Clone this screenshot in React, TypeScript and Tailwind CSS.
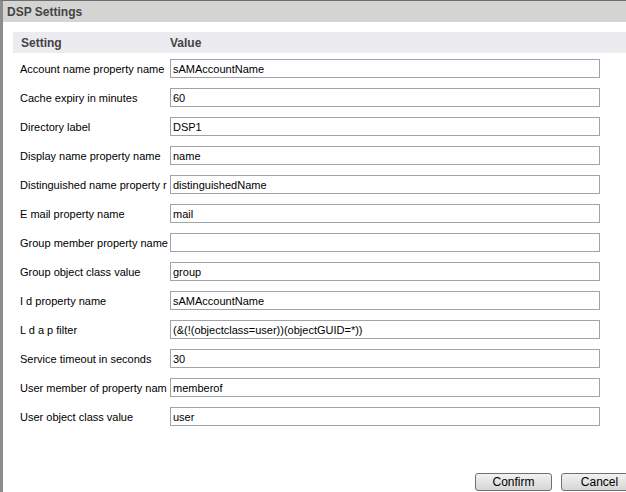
const ROWS: [string, string][] = [
  ["Account name property name", "sAMAccountName"],
  ["Cache expiry in minutes", "60"],
  ["Directory label", "DSP1"],
  ["Display name property name", "name"],
  ["Distinguished name property r", "distinguishedName"],
  ["E mail property name", "mail"],
  ["Group member property name", ""],
  ["Group object class value", "group"],
  ["I d property name", "sAMAccountName"],
  ["L d a p filter", "(&(!(objectclass=user))(objectGUID=*))"],
  ["Service timeout in seconds", "30"],
  ["User member of property nam", "memberof"],
  ["User object class value", "user"],
];

export default function App() {
  return (
    <div
      className="flex h-[492px] w-[626px] flex-col overflow-hidden border-t border-l-[3px] border-t-[#6f6f6f] border-l-[#8c8c8c] bg-white text-[11px] text-black"
      style={{ fontFamily: '"Liberation Sans", Arial, sans-serif' }}
    >
      <div className="flex h-[21px] shrink-0 items-center bg-[#d4d4d2] pl-[4px] text-[12px] font-bold text-[#444]">
        DSP Settings
      </div>

      <div className="flex flex-1 flex-col pl-[10px] pt-[10px]">
        <div className="flex h-[21px] items-center bg-[#ebebf0] text-[12px] font-bold text-[#444]">
          <span className="w-[157px] pl-[8px]">Setting</span>
          <span>Value</span>
        </div>

        <div className="flex flex-col pt-[6px]">
          {ROWS.map(([label, value]) => (
            <div key={label} className="flex h-[29px] items-start">
              <div className="h-[19px] w-[150px] shrink-0 whitespace-nowrap pl-[7px] pt-[1px] leading-[19px]">
                {label}
              </div>
              <div className="ml-[7px] flex h-[19px] w-[430px] items-center border border-[#a0a4a8] px-[2px] pt-[1px] leading-none">
                {value}
              </div>
            </div>
          ))}
        </div>

        <div className="mt-auto flex justify-end gap-[9px] pb-[1px]">
          <button className="h-[18px] w-[77px] rounded-[3px] border border-[#707070] bg-gradient-to-b from-[#f2f2f2] to-[#d6d6d6] text-[12px] leading-none">
            Confirm
          </button>
          <button className="-mr-[12px] h-[18px] w-[77px] rounded-[3px] border border-[#707070] bg-gradient-to-b from-[#f2f2f2] to-[#d6d6d6] text-[12px] leading-none">
            Cancel
          </button>
        </div>
      </div>
    </div>
  );
}
